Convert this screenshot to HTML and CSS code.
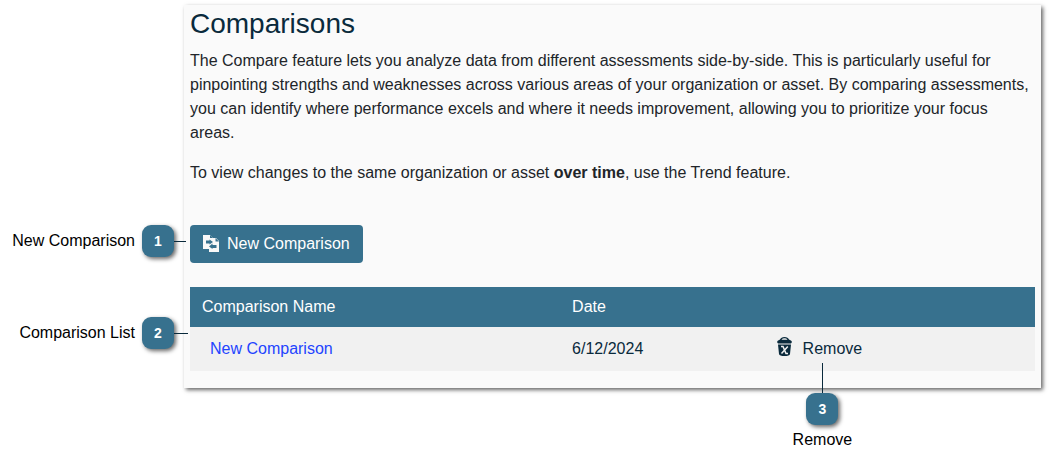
FILE: index.html
```html
<!DOCTYPE html>
<html lang="en">
<head>
<meta charset="utf-8">
<title>Comparisons</title>
<link rel="stylesheet" href="styles.css">
</head>
<body>
<main class="panel">
  <h1 class="title">Comparisons</h1>
  <p class="text">The Compare feature lets you analyze data from different assessments side-by-side. This is particularly useful for pinpointing strengths and weaknesses across various areas of your organization or asset. By comparing assessments, you can identify where performance excels and where it needs improvement, allowing you to prioritize your focus areas.</p>
  <p class="text">To view changes to the same organization or asset <strong>over time</strong>, use the Trend feature.</p>

  <div class="toolbar">
    <button class="btn-new" type="button">
      <svg class="icon-compare" viewBox="0 0 16 17" aria-hidden="true">
        <path fill="#f8f8f8" d="M0 0h7l3 3h3l3 3v11H6v-3H0z"/>
        <path fill="#37718e" d="M7 0l3 3H7zM12.500 3L16 6.500h-3.500zM3 5.500h3.500V4.500L10 7 6.500 9.500v-1H3zM13.500 10H9.500V8.500L6 11.500l3.500 2.500v-1h4z"/>
      </svg>
      <span>New Comparison</span>
    </button>
    <div class="callout callout-side callout-button">
      <span class="callout-label">New Comparison</span>
      <span class="badge">1</span>
      <span class="line"></span>
    </div>
  </div>

  <div class="list">
    <table class="table">
      <thead>
        <tr><th class="col-name" scope="col">Comparison Name</th><th class="col-date" scope="col">Date</th><th></th></tr>
      </thead>
      <tbody>
        <tr>
          <td class="name"><a class="link" href="#comparison">New Comparison</a></td>
          <td>6/12/2024</td>
          <td class="action">
            <button class="btn-remove" type="button">
              <svg class="icon-trash" viewBox="0 0 15 20" aria-hidden="true">
                <path fill="#0a2a3c" d="M0 5q0-1.500 3-2.500Q4 0 7.500 0T12 2.500q3 1 3 2.500L14 6.500H1zM1 7.500h13l-1 9.500q-.5 2-5.500 2T2 17z"/>
                <path fill="#f1f1f1" d="M4.500 2.700Q5.500 1.300 7.500 1.300t3 1.400z"/>
                <path fill="none" stroke="#f1f1f1" stroke-width="1.500" d="M4 9.500h2l3 7h2M10.800 9.500L4.500 16.500"/>
              </svg>
              <span>Remove</span>
            </button>
            <div class="callout callout-below">
              <span class="line line-down"></span>
              <span class="badge">3</span>
              <span class="callout-label">Remove</span>
            </div>
          </td>
        </tr>
      </tbody>
    </table>
    <div class="callout callout-side callout-list">
      <span class="callout-label">Comparison List</span>
      <span class="badge">2</span>
      <span class="line"></span>
    </div>
  </div>
</main>
</body>
</html>
```
FILE: styles.css
```css
* { box-sizing: border-box; }

body {
  margin: 0;
  padding: 5px 9px 76px 184px;
  background: #fff;
  color: #212529;
  font: 16px/24px "Liberation Sans", Arial, sans-serif;
}

.panel {
  padding: 2px 6px 17px;
  background: #fafafa;
  box-shadow: 2px 2px 4px rgba(0, 0, 0, 0.6);
}

.title {
  margin: 0 0 8px;
  color: #0a2a3c;
  font-size: 28px;
  font-weight: 400;
  line-height: 34px;
}

.text { margin: 0 0 16px; }

.toolbar {
  position: relative;
  display: flex;
  margin: 40px 0 24px;
}

button {
  font: inherit;
  cursor: pointer;
}

.btn-new {
  display: flex;
  align-items: center;
  gap: 8px;
  padding: 7px 13px;
  border: 0;
  border-radius: 4px;
  background: #37718e;
  color: #fff;
}

.icon-compare {
  width: 16px;
  height: 17px;
  margin-bottom: 2px;
}

.list { position: relative; }

.table {
  width: 100%;
  border-collapse: collapse;
  table-layout: fixed;
}

.table th {
  padding: 8px 12px;
  background: #37718e;
  color: #fff;
  font-weight: 400;
  text-align: left;
}

.table td {
  padding: 10px 12px;
  background: #f1f1f1;
  color: #0a2a3c;
}

.col-name { width: 43.8%; }
.col-date { width: 24.2%; }

.table .name { padding-left: 20px; }
.table .action { position: relative; }

.link {
  color: #2344ff;
  text-decoration: none;
}

.btn-remove {
  display: flex;
  align-items: center;
  gap: 11px;
  padding: 0;
  border: 0;
  background: none;
  color: #0a2a3c;
}

.icon-trash {
  width: 15px;
  height: 20px;
  margin-bottom: 4px;
}

.callout {
  position: absolute;
  display: flex;
  align-items: center;
  color: #000;
  white-space: nowrap;
}

.callout-side .badge { margin-left: 7px; }
.callout-button { top: 0; right: calc(100% + 4px); }
.callout-list { top: 30px; right: calc(100% + 2px); }
.callout-list .line { width: 14px; }

.callout-below {
  top: 36px;
  left: 28px;
  flex-direction: column;
}

.callout-below .callout-label { margin-top: 3px; }

.badge {
  display: flex;
  align-items: center;
  justify-content: center;
  width: 32px;
  height: 32px;
  border-radius: 9px;
  background: #37718e;
  box-shadow: 2px 2px 4px rgba(0, 0, 0, 0.6);
  color: #fff;
  font-size: 14px;
  font-weight: 700;
}

.line {
  width: 12px;
  height: 1px;
  background: #0a2a3c;
}

.line-down {
  width: 1px;
  height: 30px;
}
```
